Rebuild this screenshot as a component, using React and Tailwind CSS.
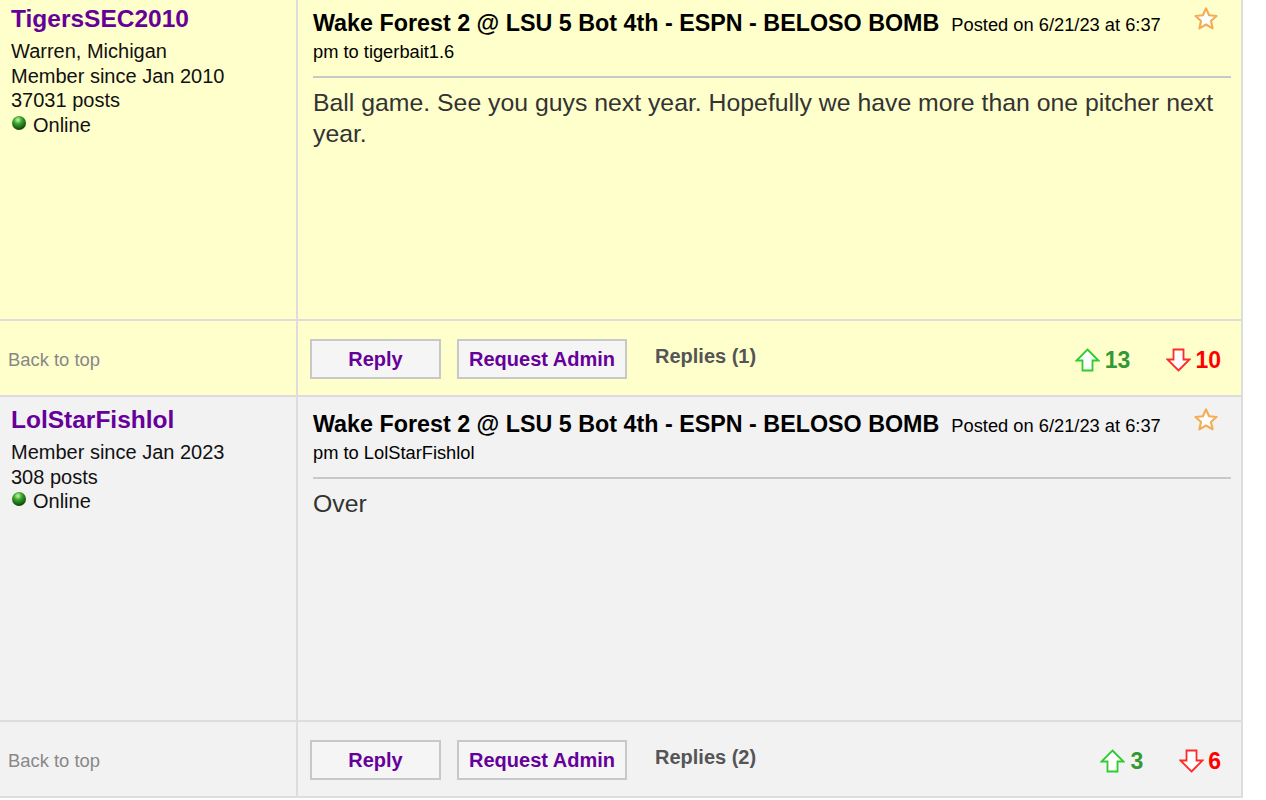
import { useId } from 'react'

const posts = [
  {
    user: 'TigersSEC2010',
    info: ['Warren, Michigan', 'Member since Jan 2010', '37031 posts'],
    to: 'tigerbait1.6',
    body: 'Ball game. See you guys next year. Hopefully we have more than one pitcher next year.',
    replies: 1,
    up: 13,
    down: 10,
    bg: 'bg-[#ffffcc]',
  },
  {
    user: 'LolStarFishlol',
    info: ['Member since Jan 2023', '308 posts'],
    to: 'LolStarFishlol',
    body: 'Over',
    replies: 2,
    up: 3,
    down: 6,
    bg: 'bg-[#f2f2f2]',
  },
]

// little green sphere for the online status
const OnlineDot = () => {
  const id = useId()
  return (
    <svg width="16" height="16" viewBox="0 0 16 16" className="shrink-0 -mt-[4px]">
      <defs>
        <radialGradient id={id} cx="42%" cy="28%" r="72%">
          <stop offset="0%" stopColor="#c6f7b0" />
          <stop offset="40%" stopColor="#3aa62a" />
          <stop offset="100%" stopColor="#0b4208" />
        </radialGradient>
      </defs>
      <circle cx="8" cy="8" r="7" fill={`url(#${id})`} />
    </svg>
  )
}

const Star = () => (
  <svg width="26" height="26" viewBox="0 0 24 24">
    <path
      d="M12 2.2l2.9 6.3 6.8.7-5.1 4.6 1.5 6.8L12 17.1l-6.1 3.5 1.5-6.8-5.1-4.6 6.8-.7z"
      fill="#fff"
      stroke="#f2ad55"
      strokeWidth="2"
      strokeLinejoin="round"
    />
  </svg>
)

const ArrowUp = () => (
  <svg width="25" height="24" viewBox="0 0 25 24">
    <path d="M12.5 1.5L23.5 12.5h-6v10h-10v-10h-6z" fill="#fff" stroke="#2ecc2e" strokeWidth="1.8" />
  </svg>
)

const ArrowDown = () => (
  <svg width="25" height="24" viewBox="0 0 25 24">
    <path d="M12.5 22.5L23.5 11.5h-6v-10h-10v10h-6z" fill="#fff" stroke="#ff2a2a" strokeWidth="1.8" />
  </svg>
)

const Post = ({ p, first }) => (
  <div className={`${p.bg} border-b-2 border-[#dddddd] ${first ? '-mt-[4px]' : ''}`}>
    <div className="grid grid-cols-[298px_1fr] h-[325px] border-b-2 border-[#dddddd]">
      <div className="border-r-2 border-[#dddddd] pl-[11px] pt-[6px]">
        <div className="text-[24.5px] leading-[34px] font-bold text-[#660099]">{p.user}</div>
        <div className="mt-[3px] text-[20px] leading-[24.5px] text-[#111]">
          {p.info.map((line) => (
            <div key={line}>{line}</div>
          ))}
          <div className="flex items-center gap-[6px]">
            <OnlineDot />
            <span>Online</span>
          </div>
        </div>
      </div>
      <div className="pl-[15px] pr-[10px] pt-[14px]">
        <div className="flex items-start">
          <div className="flex-1 pr-[30px] leading-[26px] text-black">
            <span className="text-[23.3px] font-bold mr-[12px]">Wake Forest 2 @ LSU 5 Bot 4th - ESPN - BELOSO BOMB</span>
            <span className="text-[18.3px]">Posted on 6/21/23 at 6:37 pm to {p.to}</span>
          </div>
          <div className="-mt-[4px] pr-[12px]">
            <Star />
          </div>
        </div>
        <div className="mt-[10px] border-t-2 border-[#c8c8c8]" />
        <div className="pt-[9px] pr-[10px] text-[24.8px] leading-[31px] text-[#333]">{p.body}</div>
      </div>
    </div>
    <div className="grid grid-cols-[298px_1fr] h-[74px]">
      <div className="border-r-2 border-[#dddddd] flex items-center pl-[8px] pt-[4px] text-[18.4px] text-[#888]">
        Back to top
      </div>
      <div className="flex items-center pl-[12px] pr-[20px] pt-[2px]">
        <button className="w-[131px] h-[40px] border-2 border-[#c8c8c8] bg-[#f5f5f5] text-[20px] font-bold text-[#660099]">
          Reply
        </button>
        <button className="ml-[16px] w-[170px] h-[40px] border-2 border-[#c8c8c8] bg-[#f5f5f5] text-[20px] font-bold text-[#660099]">
          Request Admin
        </button>
        <span className="ml-[28px] -mt-[6px] text-[20px] font-bold text-[#555]">Replies ({p.replies})</span>
        <div className="ml-auto flex items-center gap-[36px] pt-[2px]">
          <div className="flex items-center gap-[5px]">
            <ArrowUp />
            <span className="text-[23px] font-bold text-[#339933]">{p.up}</span>
          </div>
          <div className="flex items-center gap-[4px]">
            <ArrowDown />
            <span className="text-[23px] font-bold text-[#ff0000]">{p.down}</span>
          </div>
        </div>
      </div>
    </div>
  </div>
)

export default function App() {
  return (
    <div className="min-h-screen bg-white font-['Liberation_Sans',Arial,sans-serif] overflow-hidden">
      <div className="w-[1243px] border-r-2 border-[#dddddd]">
        {posts.map((p, i) => (
          <Post key={p.user} p={p} first={i === 0} />
        ))}
      </div>
    </div>
  )
}
